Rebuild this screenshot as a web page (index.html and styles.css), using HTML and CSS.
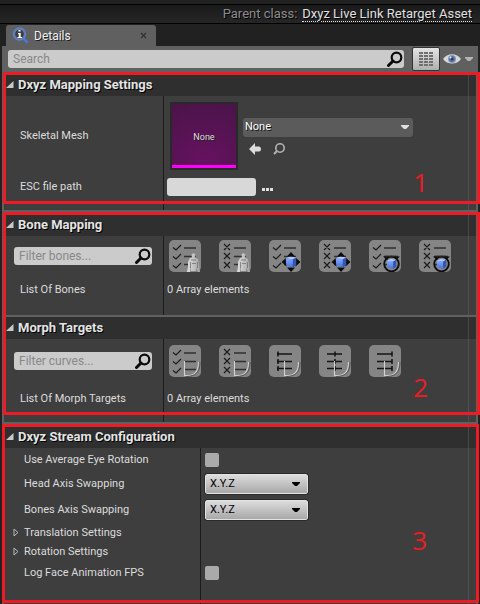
FILE: index.html
```html
<!DOCTYPE html>
<html lang="en">
<head>
<meta charset="utf-8">
<title>Details</title>
<link rel="stylesheet" href="styles.css">
</head>
<body>
<svg class="defs" aria-hidden="true">
  <defs>
    <linearGradient id="cubeFace" x1="0" y1="0" x2="0" y2="1"><stop offset="0" stop-color="#86acf8"/><stop offset="1" stop-color="#4670e0"/></linearGradient>
    <linearGradient id="boneFill" x1="0" y1="0" x2="1" y2="0"><stop offset="0" stop-color="#e0e0e0"/><stop offset="1" stop-color="#a4a4a4"/></linearGradient>
    <symbol id="lens" viewBox="0 0 16 16"><circle cx="9.500" cy="6.500" r="4.800" fill="none" stroke="currentColor" stroke-width="2.200"/><path d="M6 10 1.500 14.500" stroke="currentColor" stroke-width="3" stroke-linecap="round"/></symbol>
    <symbol id="down" viewBox="0 0 8 4"><path d="M0 0H8V1L5 4H3L0 1Z" fill="currentColor"/></symbol>
    <symbol id="open" viewBox="0 0 8 8"><path d="M7.500 0V7H0Z" fill="#c8c8c8"/></symbol>
    <symbol id="closed" viewBox="0 0 6 9"><path d="M1 1V8L5 4.500Z" fill="none" stroke="#b8b8b8"/></symbol>
    <symbol id="checks" viewBox="0 0 32 32"><path d="M4 7.500 7 10 12 5M4 16.500 7 19 12 14M4 25.500 7 28 12 23" fill="none" stroke="#1c1c1c" stroke-width="1.200"/><path d="M15 8H27M15 16.500H27M15 24.500H27" stroke="#303030" stroke-width="1.300"/></symbol>
    <symbol id="crosses" viewBox="0 0 32 32"><path d="M5 4 11 10M11 4 5 10M5 13 11 19M11 13 5 19M5 22 11 28M11 22 5 28" stroke="#1c1c1c" stroke-width="1.200"/><path d="M15 8H27M15 16.500H27M15 24.500H27" stroke="#303030" stroke-width="1.300"/></symbol>
    <symbol id="bone" viewBox="0 0 32 32"><path d="M18 32 19 27 19 22 21 18 23 17.500 22.500 14.500 24.500 13 26.500 14.500 26 17.500 29 19 30 24 31 32H28.500L28 27 27 31H22L22 26 21 32Z" fill="url(#boneFill)"/><path d="M22 20 27 20M23 23.500H27M21.500 22V28M28.500 22V28" stroke="#666" stroke-width=".7"/></symbol>
    <symbol id="cube" viewBox="0 0 12 12"><path d="M0 2 5 0 12 1 8 3Z" fill="#b0c8ff"/><path d="M0 2 8 3V12L1 10Z" fill="url(#cubeFace)"/><path d="M8 3 12 1V9L8 12Z" fill="#3156b8"/></symbol>
    <symbol id="move" viewBox="0 0 32 32"><path d="M22 12 26 16.500H18ZM22 32 18 27.500H26ZM12.500 22 17.500 17.500V26.500ZM31.500 22 26.500 17.500V26.500Z" fill="#0c0c0c"/><use href="#cube" x="16.500" y="16.500" width="11" height="11"/></symbol>
    <symbol id="rotate" viewBox="0 0 32 32"><circle cx="22.500" cy="24" r="7.300" fill="none" stroke="#0c0c0c" stroke-width="1.800"/><path d="M14 16.500H18.500V20.500ZM31 16.500H26.500V20.500Z" fill="#0c0c0c"/><path d="M16 16.500H29" stroke="#222" stroke-width="1.500"/><use href="#cube" x="17.500" y="19" width="10" height="10"/></symbol>
    <symbol id="curve" viewBox="0 0 32 32"><path d="M15.500 16V30.500H19C26 30.500 29.500 26 29.500 17" fill="none" stroke="#d2d2d2" stroke-width="1.100"/><path d="M17 31.500C26 31.500 31 28 31 17" fill="none" stroke="#555" stroke-width="1"/></symbol>
    <symbol id="lines" viewBox="0 0 32 32"><path d="M8 9H23M8 16.500H23M8 23.500H23" stroke="#151515" stroke-width="1.300"/></symbol>
    <symbol id="ticks" viewBox="0 0 2 32"><path d="M1 6.500V11.500M1 14V19M1 21V26" stroke="#111" stroke-width="1.500"/></symbol>
  </defs>
</svg>

<header class="classbar">
  <span class="classbar-label">Parent class:</span>
  <a class="classbar-link" href="#">Dxyz Live Link Retarget Asset</a>
</header>

<nav class="tabs">
  <div class="tab">
    <svg class="tab-icon" viewBox="0 0 17 17" aria-hidden="true"><path d="M11 11 15.500 15.500" stroke="#4b78d8" stroke-width="2.500"/><circle cx="7.500" cy="7" r="6" fill="#3c4046" stroke="#5681d8" stroke-width="1.500"/><circle cx="7.500" cy="7" r="4.900" fill="none" stroke="#9aabc9" stroke-width=".6"/><path d="M6.500 3H8.500V4.500H6.500ZM6 6H8.700V10H10V11H5.500V10H6.700V7H6Z" fill="#fff"/></svg>
    <span class="tab-title">Details</span>
    <button class="tab-close" aria-label="Close tab"><svg viewBox="0 0 7 7"><path d="M1 1 6 6M6 1 1 6" stroke="#303030" stroke-width="1.200"/></svg></button>
  </div>
</nav>

<main class="panel">
  <div class="toolbar">
    <div class="search"><input type="text" placeholder="Search" aria-label="Search"><svg class="lens"><use href="#lens"/></svg></div>
    <button class="matrix" aria-label="Property matrix"><svg viewBox="0 0 14 14"><path d="M0 1H14M0 4H14M0 7H14M0 10H14M0 13H14" stroke="#707070" stroke-width="2" stroke-dasharray="4 1"/></svg></button>
    <button class="view" aria-label="View options">
      <svg class="eye" viewBox="0 0 18 12"><path d="M0 6C4-.5 14-.5 18 6 14 12 4 12 0 6Z" fill="#d5d7dc"/><circle cx="9" cy="6" r="4" fill="#8598bd"/><circle cx="9" cy="6" r="3" fill="#5c74a0"/><circle cx="9" cy="6" r="1.500" fill="#2e3a52"/><circle cx="7.500" cy="4.500" r="1" fill="#eef"/></svg>
      <svg class="caret"><use href="#down"/></svg>
    </button>
  </div>

  <section class="group">
    <button class="head"><svg><use href="#open"/></svg>Dxyz Mapping Settings</button>
    <div class="body">
      <div class="row row-mesh">
        <div class="name">Skeletal Mesh</div>
        <div class="value">
          <div class="thumb">None</div>
          <div class="asset">
            <div class="combo"><select aria-label="Skeletal Mesh"><option>None</option></select><svg class="caret"><use href="#down"/></svg></div>
            <div class="asset-tools">
              <button aria-label="Use selected asset"><svg viewBox="0 0 12 12"><path d="M0 6 6 0V3.500H10Q12 3.500 12 6T10 8.500H6V12Z" fill="#dcdcdc"/></svg></button>
              <button class="browse" aria-label="Browse to asset"><svg viewBox="0 0 12 12"><circle cx="7" cy="5" r="4.200" fill="none" stroke="currentColor" stroke-width="1.600"/><path d="M4 8 1 11" stroke="currentColor" stroke-width="2"/></svg></button>
            </div>
          </div>
        </div>
      </div>
      <div class="row row-path">
        <label class="name" for="esc">ESC file path</label>
        <div class="value"><input class="path" id="esc" type="text"><button class="dots" aria-label="Choose file"><svg viewBox="0 0 12 4"><path d="M0 0H3V3H0ZM4 0H7V3H4ZM8 0H11V3H8Z" fill="#e0e0e0"/></svg></button></div>
      </div>
    </div>
    <div class="frame frame-short"><span>1</span></div>
  </section>

  <div class="group">
    <section>
      <button class="head"><svg><use href="#open"/></svg>Bone Mapping</button>
      <div class="body body-bones">
        <div class="row row-bones">
          <div class="filter search"><input type="text" placeholder="Filter bones..." aria-label="Filter bones"><svg class="lens"><use href="#lens"/></svg></div>
          <div class="value tools">
            <button aria-label="Select all bones"><svg viewBox="0 0 32 32"><use href="#checks"/><use href="#bone"/></svg></button>
            <button aria-label="Clear all bones"><svg viewBox="0 0 32 32"><use href="#crosses"/><use href="#bone"/></svg></button>
            <button aria-label="Select all translations"><svg viewBox="0 0 32 32"><use href="#checks"/><use href="#move"/></svg></button>
            <button aria-label="Clear all translations"><svg viewBox="0 0 32 32"><use href="#crosses"/><use href="#move"/></svg></button>
            <button aria-label="Select all rotations"><svg viewBox="0 0 32 32"><use href="#checks"/><use href="#rotate"/></svg></button>
            <button aria-label="Clear all rotations"><svg viewBox="0 0 32 32"><use href="#crosses"/><use href="#rotate"/></svg></button>
          </div>
        </div>
        <div class="row row-list"><div class="name">List Of Bones</div><div class="value">0 Array elements</div></div>
      </div>
    </section>
    <section class="morphs">
      <button class="head"><svg><use href="#open"/></svg>Morph Targets</button>
      <div class="body body-morphs">
        <div class="row row-curves">
          <div class="filter search"><input type="text" placeholder="Filter curves..." aria-label="Filter curves"><svg class="lens"><use href="#lens"/></svg></div>
          <div class="value tools">
            <button aria-label="Select all curves"><svg viewBox="0 0 32 32"><use href="#checks"/><use href="#curve"/></svg></button>
            <button aria-label="Clear all curves"><svg viewBox="0 0 32 32"><use href="#crosses"/><use href="#curve"/></svg></button>
            <button aria-label="Set curves to minimum"><svg viewBox="0 0 32 32"><use href="#lines"/><use href="#ticks" x="8" width="2"/><use href="#curve"/></svg></button>
            <button aria-label="Set curves to middle"><svg viewBox="0 0 32 32"><use href="#lines"/><use href="#ticks" x="15" width="2"/><use href="#curve"/></svg></button>
            <button aria-label="Set curves to maximum"><svg viewBox="0 0 32 32"><use href="#lines"/><use href="#ticks" x="22" width="2"/><use href="#curve"/></svg></button>
          </div>
        </div>
        <div class="row row-list"><div class="name">List Of Morph Targets</div><div class="value">0 Array elements</div></div>
      </div>
    </section>
    <div class="frame frame-tall"><span>2</span></div>
  </div>

  <section class="group group-stream">
    <button class="head"><svg><use href="#open"/></svg>Dxyz Stream Configuration</button>
    <div class="body body-wide">
      <div class="row"><label class="name" for="eye">Use Average Eye Rotation</label><div class="value"><input id="eye" type="checkbox"></div></div>
      <div class="row row-axis"><label class="name" for="head">Head Axis Swapping</label><div class="value"><div class="axis"><select id="head"><option>X.Y.Z</option></select><svg class="caret"><use href="#down"/></svg></div></div></div>
      <div class="row row-axis"><label class="name" for="bones">Bones Axis Swapping</label><div class="value"><div class="axis"><select id="bones"><option>X.Y.Z</option></select><svg class="caret"><use href="#down"/></svg></div></div></div>
      <button class="row row-fold"><svg><use href="#closed"/></svg>Translation Settings</button>
      <button class="row row-fold"><svg><use href="#closed"/></svg>Rotation Settings</button>
      <div class="row"><label class="name" for="fps">Log Face Animation FPS</label><div class="value"><input id="fps" type="checkbox"></div></div>
    </div>
    <div class="frame frame-stream"><span>3</span></div>
  </section>
</main>
</body>
</html>
```
FILE: styles.css
```css
* { box-sizing: border-box; }
body {
  margin: 0;
  min-height: 100vh;
  display: flex;
  flex-direction: column;
  background: #222;
  color: #dcdcdc;
  font: 12px/16px Roboto, "Liberation Sans", sans-serif;
}
button, input, select { font: inherit; color: inherit; margin: 0; padding: 0; border: 0; }
button { background: none; }
svg { display: block; flex: none; }
.defs { position: absolute; width: 0; height: 0; }

.classbar {
  display: flex;
  align-items: center;
  justify-content: flex-end;
  gap: 5px;
  height: 20px;
  margin-top: 4px;
  padding-right: 8px;
  border: solid #000;
  border-width: 1px 0;
  background: linear-gradient(#1a1a1a, #262626);
  font-size: 13px;
  text-shadow: 1px 1px #000;
}
.classbar-label { color: #8c8c8c; }
.classbar-link { color: #e0e0e0; text-decoration: none; border-bottom: 1px dotted #e0e0e0; line-height: 15px; }

.tabs { padding: 1px 6px 0; background: #212121; }
.tab {
  display: flex;
  align-items: center;
  width: 150px;
  height: 21px;
  padding: 0 9px 0 6px;
  border-radius: 3px 3px 0 0;
  background: #606060;
  color: #f0f0f0;
  text-shadow: 1px 1px #222;
}
.tab-icon { width: 17px; height: 17px; }
.tab-title { flex: 1; padding-left: 5px; }
.tab-close svg { width: 7px; height: 7px; }

.panel {
  flex: 1;
  display: flex;
  flex-direction: column;
  gap: 2px;
  margin: 0 2px;
  padding: 0 2px;
  background: #606060;
}
.toolbar { display: flex; align-items: center; height: 24px; padding: 2px 3px 0 4px; }
.search { display: flex; align-items: center; height: 18px; padding: 0 1px 0 5px; border-radius: 3px; background: #cbcbcb; font-size: 12px; }
.search input { flex: 1; min-width: 0; background: none; outline: 0; color: #222; }
.search input::placeholder { color: #888; opacity: 1; }
.lens { width: 16px; height: 16px; color: #0a0a0a; }
.toolbar .search { flex: 1; margin-right: 8px; }
.matrix {
  display: grid;
  place-items: center;
  width: 28px;
  height: 24px;
  border: 1px solid #333;
  border-radius: 2px;
  background: linear-gradient(#e4e4e4, #b0b0b0);
}
.matrix svg { width: 14px; height: 14px; }
.view { display: flex; align-items: center; gap: 4px; padding-left: 3px; color: #b4b4b4; }
.eye { width: 18px; height: 12px; }
.caret { width: 8px; height: 4px; }

.group { position: relative; }
.group-stream { flex: 1; display: flex; flex-direction: column; }
.head {
  display: flex;
  align-items: center;
  gap: 4px;
  width: 100%;
  height: 24px;
  padding: 2px 0 0 2px;
  background: linear-gradient(90deg, transparent calc(100% - 8px), #484848 0, #484848 calc(100% - 7px), transparent 0) #2f2f2f;
  color: #e4e4e4;
  font-size: 13px;
  font-weight: 700;
  text-align: left;
  text-shadow: 1px 1px #000;
}
.head svg { width: 8px; height: 8px; }
.body {
  --split: 159px;
  padding-bottom: 12px;
  font-size: 11px;
  background:
    linear-gradient(90deg, transparent var(--split), #1c1c1c 0, #1c1c1c calc(var(--split) + 1px), transparent 0),
    linear-gradient(90deg, #3e3e3e calc(100% - 8px), #505050 0, #505050 calc(100% - 7px), #3e3e3e 0);
}
.body-wide { --split: 196px; flex: 1; }
.row { display: grid; grid-template-columns: var(--split) minmax(0, 1fr); align-items: center; width: 100%; height: 23px; }
.name { padding-left: 16px; }
.value { display: flex; align-items: center; padding-left: 4px; }

.row-mesh { height: 80px; }
.row-path { height: 22px; }
.thumb {
  display: grid;
  place-items: center;
  width: 68px;
  height: 68px;
  margin: 0 5px 0 3px;
  padding-top: 1px;
  border: 2px solid #292929;
  background: linear-gradient(#ff00ff, #ff00ff) bottom / 100% 3px no-repeat, radial-gradient(circle at 50% 90%, #66125f, #4a1449);
  color: #ddd;
  font-size: 9px;
  text-shadow: 1px 1px #222;
}
.asset { flex: 1; }
.combo { display: flex; align-items: center; width: 170px; height: 19px; border-radius: 3px; background: #5b5b5b; padding-right: 4px; color: #e0e0e0; }
.combo select { flex: 1; appearance: none; background: none; padding-left: 2px; color: #fff; text-shadow: 1px 1px #111; }
.asset-tools { display: flex; gap: 12px; padding: 6px 6px 0; }
.asset-tools button { height: 12px; }
.asset-tools svg { width: 12px; height: 12px; }
.browse { color: #b4b4b4; }
.path { width: 89px; height: 18px; border-radius: 3px; background: #d8d8d8; color: #222; padding: 0 4px; }
.dots { padding: 6px 0 0 6px; }
.dots svg { width: 12px; height: 4px; }

.body-bones { padding-bottom: 11px; }
.row-bones { height: 40px; }
.row-bones + .row-list { height: 28px; }
.filter { margin: 0 11px 0 10px; }
.tools { gap: 18px; padding-left: 6px; }
.tools button { width: 32px; height: 32px; border-radius: 5px; background: #858585; }
.tools svg { width: 32px; height: 32px; }
.morphs { margin-top: 2px; }
.morphs .head { height: 22px; padding-top: 0; }
.body-morphs { padding-bottom: 7px; }
.row-curves { height: 44px; }
.row-list { height: 32px; }

.body-wide .name { padding-left: 20px; }
.body-wide .value { padding-left: 5px; }
.body-wide input { appearance: none; width: 14px; height: 14px; border-radius: 2px; background: #aaa; }
.row-axis { height: 26px; }
.axis {
  display: flex;
  align-items: center;
  width: 103px;
  height: 20px;
  padding-right: 7px;
  border: 1px solid #e2e2e2;
  border-radius: 2px;
  outline: 1px solid #2a2a2a;
  background: linear-gradient(#dcdcdc, #a8a8a8);
  color: #000;
}
.axis select { flex: 1; appearance: none; background: none; padding-left: 4px; }
.row-fold { display: flex; gap: 5px; height: 19px; padding-left: 9px; text-align: left; }
.row-fold svg { width: 6px; height: 9px; }

.frame { position: absolute; inset: 0 -4px 7px -1px; border: 3px solid #ed1c24; pointer-events: none; }
.frame-short { bottom: 6px; }
.frame-stream { inset: 0 -3px 1px -2px; }
.frame span {
  position: absolute;
  right: 49px;
  bottom: 4px;
  color: #ed1c24;
  font: 26px/30px "Open Sans", "Noto Sans", sans-serif;
}
.frame-tall span { bottom: 10px; }
.frame-stream span { bottom: 45px; }
```
